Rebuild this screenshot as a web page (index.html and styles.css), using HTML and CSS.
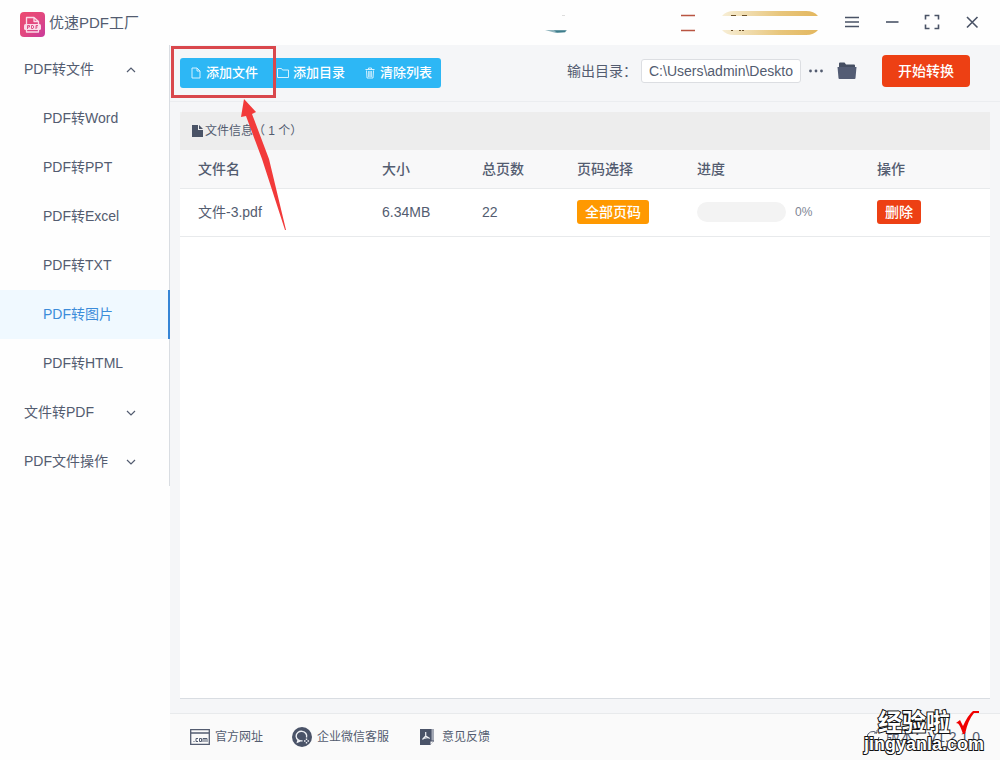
FILE: index.html
```html
<!DOCTYPE html>
<html lang="zh-CN">
<head>
<meta charset="utf-8">
<title>优速PDF工厂</title>
<link rel="stylesheet" href="styles.css">
</head>
<body>
<header class="titlebar">
  <svg class="logo" width="25" height="25" viewBox="0 0 25 25">
    <defs><linearGradient id="lg" x1="0" y1="0" x2="1" y2="1"><stop offset="0" stop-color="#ec4a70"/><stop offset=".5" stop-color="#e2487f"/><stop offset="1" stop-color="#c83a9c"/></linearGradient></defs>
    <rect width="25" height="25" rx="4" fill="url(#lg)"/>
    <path d="M6.500 12V5.500h7.500l4.500 4V12M14 5.500v4h4.500M6.500 18v2h12v-2" fill="none" stroke="#fbdbe8" stroke-width="1.300" stroke-linejoin="round"/>
    <rect x="4" y="12" width="17" height="6" rx="1.500" fill="#fbdbe8"/>
    <path d="M7.500 17v-3.500h2v1.500h-2M11.500 13.500V16.500h1.500l.8-1.500-.8-1.500zM16 17v-3.500h2M16 15h1.500" fill="none" stroke="#d9447f" stroke-width=".9"/>
  </svg>
  <h1 class="brand">优速PDF工厂</h1>
  <div class="account">
    <svg width="22" height="24" viewBox="0 0 22 24"><path d="M0 19h22l-2 2.500-9 .5z" fill="#8fb4bd"/><path d="M9 19.500h12l-1 1.500-8 .5z" fill="#3e7d8c"/><path d="M17 4.500h3" stroke="#ddd"/></svg>
    <svg width="14" height="24" viewBox="0 0 14 24"><path d="M0 4.500h14M0 19.500h14" stroke="#b95542" stroke-width="1.500"/></svg>
    <svg width="96" height="24" viewBox="0 0 96 24">
      <defs><linearGradient id="gold"><stop offset="0" stop-color="#f7eed6"/><stop offset=".6" stop-color="#e8c67c"/><stop offset="1" stop-color="#e3b75f"/></linearGradient></defs>
      <path d="M0 5Q4 0 12 0h72q8 0 12 5zM0 19h96q-4 5-12 5H12Q4 24 0 19z" fill="url(#gold)"/>
      <path d="M9 4.500h5M20 4.500h5M9 19.500h2M17 19.500h2M20 19.500h2" stroke="#6a4f27"/>
    </svg>
  </div>
  <div class="window-controls">
    <button aria-label="菜单"><svg width="16" height="16" viewBox="0 0 16 16"><path d="M1 3.500h14M1 8h14M1 12.500h14"/></svg></button>
    <button aria-label="最小化"><svg width="16" height="16" viewBox="0 0 16 16"><path d="M2 8h12.500"/></svg></button>
    <button aria-label="最大化"><svg width="16" height="16" viewBox="0 0 16 16"><path d="M1.500 5.500v-4h4M10.500 1.500h4v4M14.500 10.500v4h-4M5.500 14.500h-4v-4"/></svg></button>
    <button aria-label="关闭"><svg width="16" height="16" viewBox="0 0 16 16"><path d="M3 3l10.500 10.500M13.500 3L3 13.500"/></svg></button>
  </div>
</header>

<div class="workspace">
  <nav class="sidebar">
    <ul class="menu">
      <li><a class="group" href="#">PDF转文件<svg width="10" height="10" viewBox="0 0 10 10"><path d="M1 7l4-4 4 4"/></svg></a></li>
      <li><a class="item" href="#">PDF转Word</a></li>
      <li><a class="item" href="#">PDF转PPT</a></li>
      <li><a class="item" href="#">PDF转Excel</a></li>
      <li><a class="item" href="#">PDF转TXT</a></li>
      <li><a class="item active" href="#">PDF转图片</a></li>
      <li><a class="item" href="#">PDF转HTML</a></li>
      <li><a class="group" href="#">文件转PDF<svg width="10" height="10" viewBox="0 0 10 10"><path d="M1 3l4 4 4-4"/></svg></a></li>
      <li><a class="group" href="#">PDF文件操作<svg width="10" height="10" viewBox="0 0 10 10"><path d="M1 3l4 4 4-4"/></svg></a></li>
    </ul>
  </nav>

  <main class="main">
    <div class="toolbar">
      <div class="actions">
        <button><svg width="12" height="12" viewBox="0 0 12 12"><path d="M2 1h5l3 3v7H2zM7 1v3h3"/></svg>添加文件</button>
        <button><svg width="12" height="12" viewBox="0 0 12 12"><path d="M.5 10.500v-9h4l1 1.500h6v7.500z"/></svg>添加目录</button>
        <button><svg width="12" height="12" viewBox="0 0 12 12"><path d="M1.500 2.500h9M4.500 2V1h3v1M2.500 3.500l.5 7.500h6l.5-7.500M4.700 4v6M6 4v6M7.300 4v6"/></svg>清除列表</button>
        <span class="highlight"></span>
      </div>
      <div class="output">
        <label for="dir">输出目录：</label>
        <input id="dir" type="text" value="C:\Users\admin\Desktop">
        <button class="icon-button" aria-label="浏览"><svg width="16" height="16" viewBox="0 0 16 16"><g fill="#535c70"><circle cx="2.500" cy="8" r="1.400"/><circle cx="8" cy="8" r="1.400"/><circle cx="13.500" cy="8" r="1.400"/></g></svg></button>
        <button class="icon-button" aria-label="打开目录"><svg width="20" height="18" viewBox="0 0 20 18"><path d="M2 5V1.500Q2 .5 3 .5h4.500l1.500 2h8q1 0 1 1V5z" fill="#454e62"/><path d="M.5 5h19l-1 11q0 1-1 1h-15q-1 0-1-1z" fill="#535c74"/></svg></button>
        <button class="start">开始转换</button>
      </div>
    </div>

    <section class="files">
      <h2 class="files-title"><svg width="11" height="14" viewBox="0 0 11 14"><path d="M0 1h6v5h5v7H0zM7 1l4 4H7z" fill="#4a5366"/></svg>文件信息（ 1 个）</h2>
      <table class="file-table">
        <colgroup><col class="c-name"><col class="c-size"><col class="c-pages"><col class="c-range"><col class="c-progress"><col></colgroup>
        <thead><tr><th>文件名</th><th>大小</th><th>总页数</th><th>页码选择</th><th>进度</th><th>操作</th></tr></thead>
        <tbody><tr>
          <td>文件-3.pdf</td><td>6.34MB</td><td>22</td>
          <td><button class="tag orange">全部页码</button></td>
          <td><div class="progress"><span class="bar"></span><span>0%</span></div></td>
          <td><button class="tag red">删除</button></td>
        </tr></tbody>
      </table>
    </section>

    <footer class="footer">
      <a class="site" href="#"><svg width="20" height="16" viewBox="0 0 20 16"><path d="M.7.700h18.600v14.600H.7zM.7 4h18.600" fill="none" stroke="#535c70" stroke-width="1.300"/><g fill="none" stroke="#535c70"><path d="M3.500 12.500h1M8 9.500H6v3h2M9.500 9.500h2v3h-2zM13 13V9.500h4V13M15 9.500V13"/></g></svg>官方网址</a>
      <a class="service" href="#"><svg width="20" height="20" viewBox="0 0 20 20"><circle cx="10" cy="10" r="10" fill="#4a5368"/><g fill="none" stroke="#eef0f4" stroke-width="1.400"><path d="M14.500 10.500a5.300 4.800 0 1 0-4 3.300M6 13l-.5 2 2.500-1"/><path d="M14.500 11.500v1.500M14.500 15v1.500M12 14h1.500M15.500 14H17"/></g></svg>企业微信客服</a>
      <a class="feedback" href="#"><svg width="16" height="18" viewBox="0 0 16 18"><path d="M1 1h14v12l-4 4H1z" fill="#4a5368"/><path d="M12.500 1H15v12l-2.500 1z" fill="#a4a9b5"/><path d="M11 17v-4h4" fill="#f9f9f9" stroke="#4a5368"/><path d="M6.700 4v4L3.500 11.500M6.700 8l4 2.500M4.500 10.500L9 9.500" fill="none" stroke="#eef0f4" stroke-width="1.200"/></svg>意见反馈</a>
      <div class="version"><svg width="14" height="14" viewBox="0 0 14 14"><path d="M1 7a6 6 0 0 1 10-4M13 7a6 6 0 0 1-10 4M11 0v3H8" fill="none" stroke="#535c70"/></svg>版本：V1.2.1.0
        <div class="watermark">
          <div class="mark-top">经验啦<svg width="24" height="24" viewBox="0 0 24 24"><path d="M1 12l4-3 3 6Q13 4 18 0h6v2h-5Q13 9 10 23H8Q5 14 3 12.500z" fill="#f00000"/></svg></div>
          <div class="mark-url">jingyanla.com</div>
        </div>
      </div>
    </footer>
  </main>
</div>
<svg class="arrow" width="46" height="132" viewBox="0 0 46 132"><path d="M3 0L15 13l-4 2 17 45 17 71h-1L21 60 5 17l-5 1z" fill="#f23a3a"/></svg>
</body>
</html>
```

FILE: styles.css
```css
* { box-sizing: border-box; }

body {
  position: relative;
  display: flex;
  flex-direction: column;
  min-height: 100vh;
  margin: 0;
  background: #fefefe;
  color: #535c70;
  font: 14px/20px "Liberation Sans", "Noto Sans CJK SC", sans-serif;
}

button, input { font: inherit; color: inherit; }
button { padding: 0; border: 0; background: none; }
a { color: inherit; text-decoration: none; }
svg { display: block; flex: none; }

.titlebar { display: flex; align-items: center; height: 45px; padding: 0 20px; }
.logo { margin: 3px 4px 0 0; }
.brand { margin: 0; font-size: 15px; font-weight: 400; }
.account { display: flex; align-items: center; margin-left: auto; }
.account svg:nth-child(2) { margin-left: 114px; }
.account svg:nth-child(3) { margin-left: 27px; }
.window-controls { display: flex; gap: 24px; margin-left: 26px; padding-bottom: 2px; }
.window-controls svg { fill: none; stroke: #4a5366; stroke-width: 1.6; }

.workspace { display: flex; flex: 1; }
.sidebar { width: 170px; flex: none; }
.menu { margin: 0; padding: 0; list-style: none; border-right: 1px solid #d9dde2; }
.menu a { display: flex; align-items: center; height: 49px; padding-bottom: 2px; }
.menu .group { justify-content: space-between; padding: 0 33px 2px 24px; }
.menu .group svg { margin-top: 2px; fill: none; stroke: #535c70; stroke-width: 1.2; }
.menu .item { padding-left: 43px; }
.menu .active { margin-right: -1px; border-right: 2px solid #3585d6; background: #f0f9ff; color: #3c8cda; }

.main { display: flex; flex: 1; flex-direction: column; min-width: 0; background: #f5f6f8; }
.toolbar {
  display: flex;
  align-items: center;
  justify-content: space-between;
  height: 57px;
  padding: 0 30px 0 10px;
  border-bottom: 1px solid #ebedf0;
}
.actions { position: relative; display: flex; border-radius: 3px; background: #2db7f5; }
.actions button {
  display: flex;
  align-items: center;
  gap: 4px;
  height: 30px;
  padding: 0 9px 0 10px;
  color: #fff;
  font-size: 13px;
  font-weight: 500;
}
.actions svg { fill: none; stroke: #d5f1ff; }
.highlight { position: absolute; top: -12px; left: -9px; width: 105px; height: 52px; border: 3px solid #d9474c; }

.output { display: flex; align-items: center; padding-bottom: 4px; }
.output label { margin-right: 4px; }
.output input { width: 160px; height: 24px; padding: 0 7px; border: 1px solid #dcdee2; border-radius: 3px; background: #fff; }
.icon-button { margin-left: 7px; }
.icon-button + .icon-button { margin-left: 13px; }
.start { height: 32px; margin-left: 25px; padding: 0 16px; border-radius: 4px; background: #ed4014; color: #fff; font-weight: 500; }

.files { flex: 1; margin: 10px 10px 0; border-bottom: 1px solid #d9dde2; background: #fff; }
.files-title {
  display: flex;
  align-items: center;
  gap: 2px;
  height: 38px;
  margin: 0;
  padding-left: 12px;
  background: #ededed;
  font-size: 12px;
  font-weight: 400;
}
.file-table { width: 100%; border-collapse: collapse; table-layout: fixed; }
.file-table th, .file-table td { padding: 0 0 0 18px; border-bottom: 1px solid #e8eaec; text-align: left; }
.file-table th { height: 38px; background: #f8f8f9; font-weight: 500; }
.file-table td { height: 48px; }
.c-name { width: 184px; }
.c-size { width: 100px; }
.c-pages { width: 95px; }
.c-range { width: 120px; }
.c-progress { width: 180px; }
.tag { display: block; height: 24px; padding: 0 8px; border-radius: 3px; color: #fff; font-weight: 500; }
.orange { background: #ff9900; }
.red { background: #ed4014; }
.progress { display: flex; align-items: center; gap: 9px; font-size: 12px; color: #808695; }
.bar { width: 89px; height: 20px; border-radius: 10px; background: #f3f3f3; }

.footer {
  display: flex;
  align-items: center;
  height: 47px;
  margin-top: 14px;
  padding: 0 20px;
  border-top: 1px solid #e8eaec;
  background: #fafafa;
  font-size: 12px;
}
.footer a { display: flex; align-items: center; gap: 5px; }
.footer .service { margin-left: 29px; }
.footer .feedback { gap: 7px; margin-left: 30px; }
.version { position: relative; display: flex; align-items: center; gap: 6px; margin-left: auto; font-size: 14px; }
.watermark {
  position: absolute;
  right: -4px;
  bottom: -6px;
  color: #fff;
  font-weight: 700;
  -webkit-text-stroke: 2px #111;
  paint-order: stroke fill;
}
.mark-top { display: flex; align-items: center; justify-content: flex-end; gap: 5px; padding-right: 5px; font-size: 24px; line-height: 24px; }
.mark-url { font-size: 18px; line-height: 18px; }

.arrow { position: absolute; top: 99px; left: 241px; }
```
